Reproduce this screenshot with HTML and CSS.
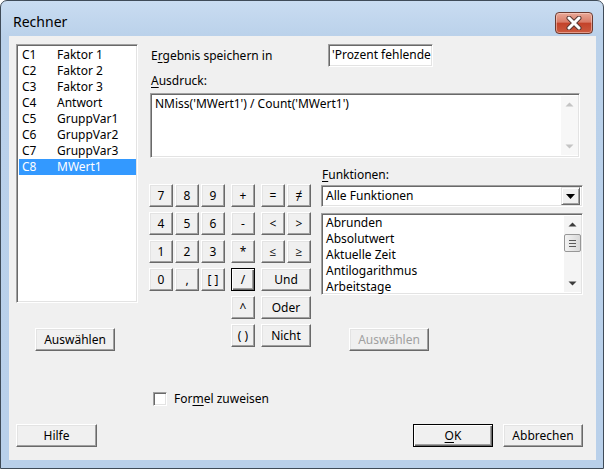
FILE: index.html
```html
<!DOCTYPE html>
<html lang="de">
<head>
  <meta charset="UTF-8" />
  <title>Rechner</title>
  <link rel="stylesheet" href="styles.css">
</head>
<body>

  <div class="window">
    <div class="titlebar">
      <div class="title">Rechner</div>
      <div class="close-btn">
        <svg width="20" height="14" viewBox="0 0 20 14">
          <path d="M5 2 L15 12 M15 2 L5 12" stroke="#5a3a34" stroke-width="5" stroke-linecap="round"/>
          <path d="M5 2 L15 12 M15 2 L5 12" stroke="#ffffff" stroke-width="3" stroke-linecap="round"/>
        </svg>
      </div>
    </div>

    <div class="client">
      <div class="main">
        <div class="left-col">
          <div class="sunken column-list">
            <div class="col-row"><span class="col-id">C1</span><span>Faktor 1</span></div>
            <div class="col-row"><span class="col-id">C2</span><span>Faktor 2</span></div>
            <div class="col-row"><span class="col-id">C3</span><span>Faktor 3</span></div>
            <div class="col-row"><span class="col-id">C4</span><span>Antwort</span></div>
            <div class="col-row"><span class="col-id">C5</span><span>GruppVar1</span></div>
            <div class="col-row"><span class="col-id">C6</span><span>GruppVar2</span></div>
            <div class="col-row"><span class="col-id">C7</span><span>GruppVar3</span></div>
            <div class="col-row selected"><span class="col-id">C8</span><span>MWert1</span></div>
          </div>
          <div class="btn select-left">Auswählen</div>
        </div>

        <div class="right-col">
          <div class="store-row">
            <div class="store-label">E<u>r</u>gebnis speichern in</div>
            <div class="sunken store-input">'Prozent fehlende Werte'</div>
          </div>

          <div class="expr-label"><u>A</u>usdruck:</div>
          <div class="sunken expr-box">
            <div class="expr-text">NMiss('MWert1') / Count('MWert1')</div>
            <div class="scrollbar disabled">
              <svg width="9" height="5" viewBox="0 0 9 5"><path d="M0.5 4.5 L4.5 0.5 L8.5 4.5 Z" fill="#c4c4c4"/></svg>
              <svg width="9" height="5" viewBox="0 0 9 5"><path d="M0.5 0.5 L4.5 4.5 L8.5 0.5 Z" fill="#c4c4c4"/></svg>
            </div>
          </div>

          <div class="tools-row">
            <div class="keypad">
              <div class="btn key">7</div>
              <div class="btn key">8</div>
              <div class="btn key">9</div>
              <div class="btn key">+</div>
              <div class="btn key">=</div>
              <div class="btn key">≠</div>

              <div class="btn key">4</div>
              <div class="btn key">5</div>
              <div class="btn key">6</div>
              <div class="btn key">-</div>
              <div class="btn key">&lt;</div>
              <div class="btn key">&gt;</div>

              <div class="btn key">1</div>
              <div class="btn key">2</div>
              <div class="btn key">3</div>
              <div class="btn key">*</div>
              <div class="btn key">≤</div>
              <div class="btn key">≥</div>

              <div class="btn key">0</div>
              <div class="btn key">,</div>
              <div class="btn key">[ ]</div>
              <div class="btn key focused">/</div>
              <div class="btn key wide">Und</div>

              <div class="btn key op-col">^</div>
              <div class="btn key wide">Oder</div>

              <div class="btn key op-col">( )</div>
              <div class="btn key wide">Nicht</div>
            </div>

            <div class="func-panel">
              <div class="func-label"><u>F</u>unktionen:</div>
              <div class="sunken combo">
                <div class="combo-text">Alle Funktionen</div>
                <div class="combo-btn">
                  <svg width="9" height="5" viewBox="0 0 9 5"><path d="M0 0 L9 0 L4.5 5 Z" fill="#000"/></svg>
                </div>
              </div>
              <div class="sunken func-list">
                <div class="func-items">
                  <div>Abrunden</div>
                  <div>Absolutwert</div>
                  <div>Aktuelle Zeit</div>
                  <div>Antilogarithmus</div>
                  <div>Arbeitstage</div>
                </div>
                <div class="scrollbar">
                  <svg width="9" height="5" viewBox="0 0 9 5"><path d="M0.5 4.5 L4.5 0.5 L8.5 4.5 Z" fill="#3c3c3c"/></svg>
                  <div class="thumb"><i></i><i></i><i></i></div>
                  <div class="spacer"></div>
                  <svg width="9" height="5" viewBox="0 0 9 5"><path d="M0.5 0.5 L4.5 4.5 L8.5 0.5 Z" fill="#3c3c3c"/></svg>
                </div>
              </div>
              <div class="btn disabled select-right">Auswählen</div>
            </div>
          </div>
        </div>
      </div>

      <div class="check-row">
        <div class="sunken checkbox"></div>
        <div>For<u>m</u>el zuweisen</div>
      </div>

      <div class="footer">
        <div class="btn dialog-btn">Hilfe</div>
        <div class="footer-right">
          <div class="btn dialog-btn default"><u>O</u>K</div>
          <div class="btn dialog-btn">Abbrechen</div>
        </div>
      </div>
    </div>
  </div>

</body>
</html>
```

FILE: styles.css
```css
* {
  box-sizing: border-box;
  margin: 0;
  padding: 0;
}

body {
  font-family: "Noto Sans", "Open Sans", "Liberation Sans", sans-serif;
  font-size: 12px;
  line-height: 16px;
  color: #000;
  background: #ffffff;
}

u {
  text-decoration-thickness: 1px;
  text-underline-offset: 2px;
}

.window {
  width: 604px;
  height: 469px;
  border: 1px solid #3f4b58;
  border-radius: 7px 7px 0 0;
  background: linear-gradient(#c9dcf1, #bad1ea 36px, #b9d0ea);
  display: flex;
  flex-direction: column;
}

.titlebar {
  height: 35px;
  padding: 7px 10px 0 12px;
  display: flex;
  justify-content: space-between;
  align-items: center;
}

.title {
  font-size: 14px;
  line-height: 20px;
}

.close-btn {
  width: 38px;
  height: 22px;
  margin-top: 1px;
  border: 1px solid #6b3b31;
  border-radius: 4px;
  background: linear-gradient(#e9a897, #d97c68 45%, #c3432a 52%, #cb5a3f);
  box-shadow: inset 0 0 0 1px rgba(255, 220, 210, 0.5);
  display: flex;
  align-items: center;
  justify-content: center;
}

.client {
  flex: 1;
  margin: 0 7px 8px 8px;
  background: #f0f0f0;
  padding: 8px 13px 13px 7px;
  display: flex;
  flex-direction: column;
}

/* shared 3d looks */
.btn {
  background: #f0f0f0;
  border: 1px solid;
  border-color: #ffffff #696969 #696969 #ffffff;
  box-shadow: inset -1px -1px #a0a0a0, inset 1px 1px #e3e3e3;
  display: flex;
  align-items: center;
  justify-content: center;
  white-space: nowrap;
}

.btn.focused,
.btn.default {
  border-color: #000;
  box-shadow: inset 1px 1px #fff, inset -1px -1px #696969, inset -2px -2px #a0a0a0;
}

.btn.disabled {
  color: #a0a0a0;
}

.sunken {
  background: #ffffff;
  border: 1px solid;
  border-color: #a0a0a0 #ffffff #ffffff #a0a0a0;
  box-shadow: inset 1px 1px #696969, inset -1px -1px #e3e3e3;
}

.main {
  display: flex;
  gap: 12px;
}

/* left column list */
.left-col {
  width: 122px;
}

.column-list {
  height: 259px;
  padding: 2px 0 0 2px;
}

.col-row {
  display: flex;
  height: 16px;
  padding-left: 3px;
  margin-right: 1px;
}

.col-id {
  width: 35px;
}

.col-row.selected {
  background: #3399ff;
  color: #fff;
}

.select-left {
  width: 80px;
  height: 23px;
  margin: 25px 0 0 19px;
}

/* right column */
.right-col {
  width: 433px;
}

.store-row {
  display: flex;
  align-items: center;
  height: 23px;
}

.store-label {
  width: 178px;
  padding-left: 1px;
}

.store-input {
  width: 105px;
  height: 23px;
  padding: 2px 0 0 3px;
  overflow: hidden;
  white-space: nowrap;
}

.expr-label {
  margin-top: 6px;
  padding-left: 1px;
}

.expr-box {
  width: 430px;
  height: 65px;
  margin-top: 4px;
  display: flex;
}

.expr-text {
  flex: 1;
  padding: 2px 0 0 4px;
}

.scrollbar {
  width: 17px;
  margin: 2px 1px 2px 0;
  background: #f4f4f4;
  display: flex;
  flex-direction: column;
  align-items: center;
  justify-content: space-between;
  padding: 6px 0;
}

.scrollbar.disabled {
  background: #f7f7f7;
}

.tools-row {
  display: flex;
  align-items: flex-start;
}

.keypad {
  margin: 26px 0 0 -1px;
  display: grid;
  grid-template-columns: 26px 26px 30px 30px 26px 24px;
  grid-auto-rows: 23px;
  row-gap: 5px;
}

.key {
  width: 24px;
}

.key.wide {
  width: 50px;
  grid-column: span 2;
}

.key.op-col {
  grid-column: 4;
}

.func-panel {
  width: 262px;
  margin: 9px 0 0 10px;
}

.func-label {
  padding-left: 1px;
}

.combo {
  height: 22px;
  margin-top: 2px;
  display: flex;
  align-items: center;
  padding: 2px;
}

.combo-text {
  flex: 1;
  padding-left: 2px;
}

.combo-btn {
  width: 19px;
  height: 18px;
  background: #f0f0f0;
  border: 1px solid;
  border-color: #e3e3e3 #696969 #696969 #e3e3e3;
  box-shadow: inset 1px 1px #fff, inset -1px -1px #a0a0a0;
  display: flex;
  align-items: center;
  justify-content: center;
}

.func-list {
  height: 82px;
  margin-top: 6px;
  display: flex;
}

.func-items {
  flex: 1;
  padding: 1px 0 0 4px;
  overflow: hidden;
}

.func-list .scrollbar {
  justify-content: flex-start;
  padding: 6px 0 6px;
}

.thumb {
  width: 17px;
  height: 18px;
  margin-top: 7px;
  border: 1px solid #979797;
  border-radius: 2px;
  background: linear-gradient(90deg, #f2f2f2, #e6e6e6 50%, #d9d9d9);
  display: flex;
  flex-direction: column;
  align-items: center;
  justify-content: center;
  gap: 2px;
}

.thumb i {
  display: block;
  width: 7px;
  height: 1px;
  background: #5a5a5a;
}

.spacer {
  flex: 1;
}

.select-right {
  width: 80px;
  height: 23px;
  margin: 33px 0 0 28px;
}

/* bottom */
.check-row {
  margin: 40px 0 0 137px;
  display: flex;
  align-items: center;
  gap: 7px;
}

.checkbox {
  width: 14px;
  height: 14px;
}

.footer {
  margin-top: 17px;
  display: flex;
  justify-content: space-between;
}

.footer-right {
  display: flex;
  gap: 10px;
}

.dialog-btn {
  width: 80px;
  height: 23px;
}

.footer > .dialog-btn {
  width: 81px;
}
```
